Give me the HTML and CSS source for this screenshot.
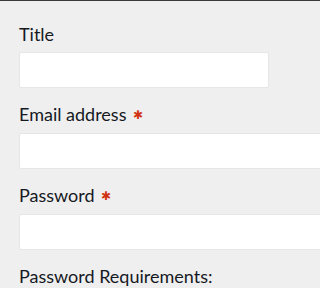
FILE: index.html
```html
<!DOCTYPE html>
<html>
<head>
<meta charset="utf-8">
<link rel="stylesheet" href="styles.css">
</head>
<body>
<form class="form">
  <div class="field">
    <label class="label">Title</label>
    <div class="input input-short"></div>
  </div>
  <div class="field">
    <label class="label">Email address <span class="req">&#x2731;</span></label>
    <div class="input input-wide"></div>
  </div>
  <div class="field">
    <label class="label">Password <span class="req">&#x2731;</span></label>
    <div class="input input-wide"></div>
  </div>
  <div class="field">
    <label class="label">Password Requirements:</label>
  </div>
</form>
</body>
</html>
```
FILE: styles.css
```css
html, body {
  margin: 0;
  padding: 0;
  background: #efefef;
}
body {
  border-top: 1px solid #3a3a3a;
  font-family: "Lato", "Open Sans", sans-serif;
  color: #16191f;
}
.form {
  display: flex;
  flex-direction: column;
  gap: 14px;
  padding: 21px 0 0 19px;
  overflow: hidden;
  height: 266px;
}
.field {
  display: flex;
  flex-direction: column;
  gap: 6px;
}
.label {
  font-size: 18px;
  line-height: 24px;
  white-space: nowrap;
}
.req {
  color: #d13212;
  font-size: 12px;
  vertical-align: 2px;
  margin-left: 2px;
}
.input {
  height: 34px;
  background: #ffffff;
  border: 1px solid #e6e6e6;
  border-radius: 2px;
  flex-shrink: 0;
}
.input-short {
  width: 248px;
}
.input-wide {
  border-right: none;
  border-radius: 2px 0 0 2px;
}
```
